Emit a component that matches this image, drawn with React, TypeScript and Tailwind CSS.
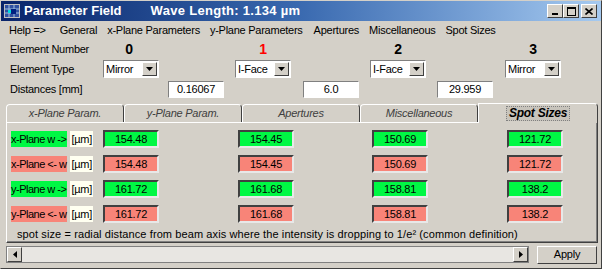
import React from "react";

const font = { fontFamily: '"Liberation Sans", Arial, sans-serif' };

const sunken =
  "border border-t-[#808080] border-l-[#808080] border-b-white border-r-white";

function DropBox({ value }: { value: string }) {
  return (
    <div className={`flex h-[18px] w-[56px] items-center bg-white ${sunken}`}>
      <span className="flex-1 pl-[2px] text-[11px] leading-none text-black">{value}</span>
      <div className="mr-[1px] flex h-[14px] w-[15px] items-center justify-center border border-t-white border-l-white border-b-[#404040] border-r-[#404040] bg-[#d4d0c8]">
        <svg width="7" height="4" viewBox="0 0 7 4">
          <path d="M0 0h7L3.5 4z" fill="#000" />
        </svg>
      </div>
    </div>
  );
}

function DistBox({ value }: { value: string }) {
  return (
    <div
      className={`flex h-[17px] w-[56px] items-center justify-center bg-white text-[11px] leading-none ${sunken}`}
    >
      {value}
    </div>
  );
}

function ValueBox({ value, red }: { value: string; red?: boolean }) {
  return (
    <div
      className={`flex h-[18px] w-[56px] items-center justify-center border-2 border-t-[#404040] border-l-[#404040] border-b-[#e8e8e8] border-r-[#e8e8e8] text-[11px] leading-none ${
        red ? "bg-[#f88478]" : "bg-[#00f844]"
      }`}
    >
      {value}
    </div>
  );
}

function Tab({ label, active }: { label: string; active?: boolean }) {
  if (active) {
    return (
      <div className="relative z-10 -mb-[1px] flex h-[20px] w-[120px] items-center justify-center rounded-tr-[4px] border border-b-0 border-l-white border-t-white border-r-[#404040] bg-[#d4d0c8]">
        <span className="border border-dotted border-[#808080] bg-[#c8c4bc] px-[2px] text-[12px] font-bold italic leading-[13px]">
          {label}
        </span>
      </div>
    );
  }
  return (
    <div className="mt-[2px] flex h-[18px] w-[118px] items-center justify-center rounded-tl-[4px] rounded-tr-[4px] border border-b-0 border-l-white border-t-white border-r-[#404040] bg-[#d4d0c8] text-[11px] italic text-[#404040]">
      {label}
    </div>
  );
}

const rows = [
  { label: "x-Plane w ->", red: false, vals: ["154.48", "154.45", "150.69", "121.72"] },
  { label: "x-Plane <- w", red: true, vals: ["154.48", "154.45", "150.69", "121.72"] },
  { label: "y-Plane w ->", red: false, vals: ["161.72", "161.68", "158.81", "138.2"] },
  { label: "y-Plane <- w", red: true, vals: ["161.72", "161.68", "158.81", "138.2"] },
];

export default function App() {
  return (
    <div
      className="h-[269px] w-[605px] overflow-hidden bg-white tracking-[-0.25px] text-black"
      style={font}
    >
      <div className="flex h-[269px] w-[602px] flex-col border border-t-[#d4d0c8] border-l-[#d4d0c8] border-r-[#404040] border-b-[#404040] bg-[#d4d0c8]">
        {/* Title bar */}
        <div className="flex h-[20px] items-center bg-gradient-to-r from-[#0a246a] via-[#3a6ab0] to-[#a6caf0] pl-[3px] pr-[4px]">
          <svg width="16" height="14" viewBox="0 0 16 14" className="mr-[4px]">
            <rect x="0" y="0" width="16" height="14" fill="#c0c0c0" />
            <rect x="1" y="1" width="14" height="12" fill="#3050a0" />
            <path d="M1 5h14M1 9h14M5 1v12M10 1v12" stroke="#a0c0e0" strokeWidth="1" />
            <rect x="4" y="6" width="8" height="3" fill="#00e0e0" />
            <rect x="7" y="5" width="5" height="5" fill="#002080" />
          </svg>
          <span className="text-[13px] font-bold tracking-normal text-white">Parameter Field</span>
          <span className="ml-[29px] text-[13px] font-bold tracking-[0.3px] text-white">
            Wave Length: 1.134 µm
          </span>
          <div className="ml-auto flex items-center">
            {["_", "□", "×"].map((c, i) => (
              <div
                key={i}
                className={`flex h-[14px] w-[16px] items-center justify-center border border-t-white border-l-white border-b-[#404040] border-r-[#404040] bg-[#d4d0c8] ${
                  i === 2 ? "ml-[2px]" : ""
                }`}
              >
                {i === 0 && <div className="mt-[6px] h-[2px] w-[6px] bg-black" />}
                {i === 1 && (
                  <div className="h-[9px] w-[9px] border border-t-2 border-black" />
                )}
                {i === 2 && (
                  <svg width="8" height="7" viewBox="0 0 8 7">
                    <path d="M0.5 0.5L7.5 6.5M7.5 0.5L0.5 6.5" stroke="#000" strokeWidth="1.6" />
                  </svg>
                )}
              </div>
            ))}
          </div>
        </div>

        {/* Menu */}
        <div className="flex h-[19px] items-center pl-[8px] text-[11px] text-black">
          <span>Help =&gt;</span>
          <span className="ml-[14px]">General</span>
          <span className="ml-[10px]">x-Plane Parameters</span>
          <span className="ml-[10px]">y-Plane Parameters</span>
          <span className="ml-[11px]">Apertures</span>
          <span className="ml-[10px]">Miscellaneous</span>
          <span className="ml-[10px]">Spot Sizes</span>
        </div>

        {/* Element number */}
        <div className="mt-[1px] flex h-[16px] items-center text-[11px]">
          <span className="w-[102px] pl-[9px]">Element Number</span>
          <div className="flex w-[52px] justify-center text-[14px] font-bold">0</div>
          <div className="ml-[80px] flex w-[56px] justify-center text-[14px] font-bold text-[#ff0000]">
            1
          </div>
          <div className="ml-[79px] flex w-[56px] justify-center text-[14px] font-bold">2</div>
          <div className="ml-[79px] flex w-[56px] justify-center text-[14px] font-bold">3</div>
        </div>

        {/* Element type */}
        <div className="mt-[3px] flex h-[18px] items-center text-[11px]">
          <span className="w-[102px] pl-[9px]">Element Type</span>
          <DropBox value="Mirror" />
          <div className="ml-[76px]">
            <DropBox value="I-Face" />
          </div>
          <div className="ml-[79px]">
            <DropBox value="I-Face" />
          </div>
          <div className="ml-[79px]">
            <DropBox value="Mirror" />
          </div>
        </div>

        {/* Distances */}
        <div className="mt-[3px] flex h-[17px] items-center text-[11px]">
          <span className="w-[167px] pl-[9px]">Distances [mm]</span>
          <DistBox value="0.16067" />
          <div className="ml-[79px]">
            <DistBox value="6.0" />
          </div>
          <div className="ml-[78px]">
            <DistBox value="29.959" />
          </div>
        </div>

        {/* Tabs */}
        <div className="ml-[5px] mt-[4px] flex items-end">
          <Tab label="x-Plane Param." />
          <Tab label="y-Plane Param." />
          <Tab label="Apertures" />
          <Tab label="Miscellaneous" />
          <Tab label="Spot Sizes" active />
        </div>

        {/* Panel */}
        <div className="ml-[5px] flex h-[121px] w-[592px] flex-col border border-t-white border-l-white border-b-[#404040] border-r-[#404040] pt-[7px] shadow-[inset_-1px_-1px_0_#808080]">
          {rows.map((r, i) => (
            <div key={i} className="mb-[7px] flex h-[18px] items-center">
              <div className="ml-[4px] flex w-[92px] items-center">
                <span
                  className={`h-[16px] pr-[1px] text-[11px] leading-[16px] tracking-[-0.5px] ${
                    r.red ? "bg-[#f88478]" : "bg-[#00f844]"
                  }`}
                >
                  {r.label}
                </span>
                <span className="ml-[3px] h-[16px] bg-[#fffff0] px-[1px] text-[11px] leading-[16px]">
                  [µm]
                </span>
              </div>
              <ValueBox value={r.vals[0]} red={r.red} />
              <div className="ml-[79px]">
                <ValueBox value={r.vals[1]} red={r.red} />
              </div>
              <div className="ml-[78px]">
                <ValueBox value={r.vals[2]} red={r.red} />
              </div>
              <div className="ml-[79px]">
                <ValueBox value={r.vals[3]} red={r.red} />
              </div>
            </div>
          ))}
          <div className="-mt-[4px] pl-[10px] text-[11px] tracking-[0.1px]">
            spot size = radial distance from beam axis where the intensity is dropping to 1/e² (common
            definition)
          </div>
        </div>

        {/* Bottom bar */}
        <div className="ml-[5px] mt-[3px] flex h-[17px] items-center">
          <div className="flex h-[17px] w-[523px] items-stretch border border-[#808080] bg-[#e8e6e2]">
            <div className="flex w-[15px] items-center justify-center border border-t-white border-l-white border-b-[#404040] border-r-[#404040] bg-[#d4d0c8]">
              <svg width="4" height="7" viewBox="0 0 4 7">
                <path d="M4 0v7L0 3.5z" fill="#000" />
              </svg>
            </div>
            <div className="flex-1" />
            <div className="flex w-[15px] items-center justify-center border border-t-white border-l-white border-b-[#404040] border-r-[#404040] bg-[#d4d0c8]">
              <svg width="4" height="7" viewBox="0 0 4 7">
                <path d="M0 0v7L4 3.5z" fill="#000" />
              </svg>
            </div>
          </div>
          <div className="ml-[8px] flex h-[18px] w-[60px] items-center justify-center border border-t-white border-l-white border-b-[#404040] border-r-[#404040] bg-[#d4d0c8] text-[11px]">
            Apply
          </div>
        </div>
      </div>
    </div>
  );
}
